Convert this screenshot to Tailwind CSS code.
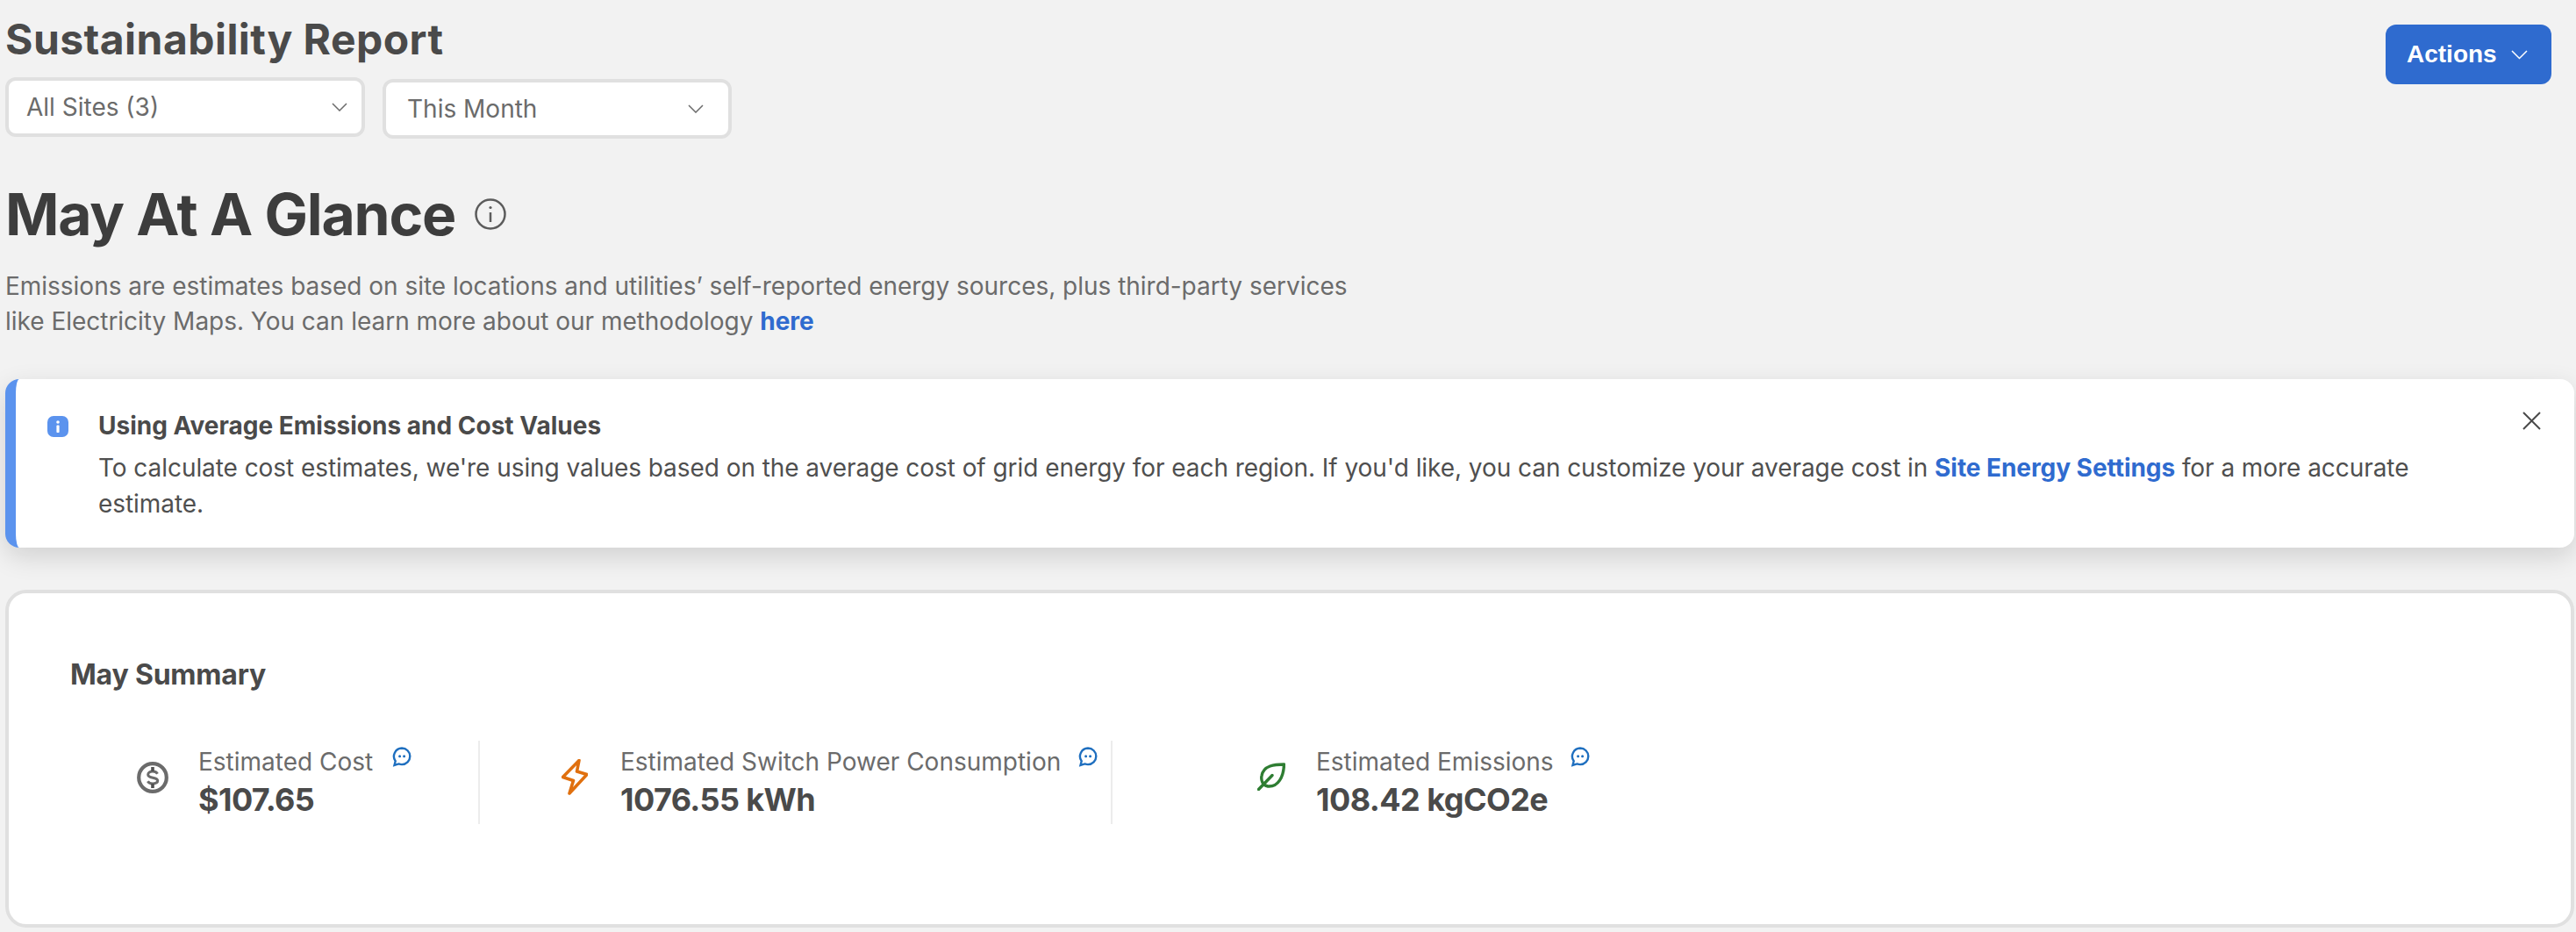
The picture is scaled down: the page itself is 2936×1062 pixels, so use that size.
<!DOCTYPE html>
<html lang="en">
<head>
  <meta charset="UTF-8">
  <title>Sustainability Report</title>
  <script src="https://cdn.jsdelivr.net/npm/@tailwindcss/browser@4"></script>
</head>
<body class="bg-[#f2f2f2] font-['Inter',sans-serif] h-[1062px] overflow-hidden pl-[6px] pr-[2px]">
  <!-- header -->
  <div class="flex justify-between items-start">
    <div>
      <h1 class="pt-[17px] h-[73px] text-[48px] leading-[56px] font-bold text-[#4a4a4a] tracking-[0.45px]">Sustainability Report</h1>
      <div class="flex items-start gap-[20px] mt-[15px]">
        <div class="w-[410px] h-[68px] bg-white border-[4px] border-[#e0e0e0] rounded-[12px] flex items-center justify-between pl-[20px] pr-[16px] text-[28px] text-[#6b6b6b]">
          <span>All Sites (3)</span>
          <svg class="w-[18px] h-[10px]" viewBox="0 0 18 10" fill="none" stroke="#6b6b6b" stroke-width="1.5"><path d="M1 1l8 8 8-8"/></svg>
        </div>
        <div class="w-[398px] h-[68px] mt-[2px] bg-white border-[4px] border-[#e0e0e0] rounded-[12px] flex items-center justify-between pl-[24px] pr-[28px] text-[28px] text-[#6b6b6b]">
          <span>This Month</span>
          <svg class="w-[18px] h-[10px]" viewBox="0 0 18 10" fill="none" stroke="#6b6b6b" stroke-width="1.5"><path d="M1 1l8 8 8-8"/></svg>
        </div>
      </div>
    </div>
    <button class="mt-[28px] mr-[26px] w-[189px] h-[68px] bg-[#2f6bcf] rounded-[12px] flex items-center gap-[16px] pl-[24px] text-white text-[28px] font-bold font-['Liberation_Sans',sans-serif]">
      <span>Actions</span>
      <svg class="w-[19px] h-[11px]" viewBox="0 0 19 11" fill="none" stroke="#fff" stroke-width="1.5"><path d="M1 1l8.500 8.500L18 1"/></svg>
    </button>
  </div>

  <!-- glance -->
  <div class="flex items-center gap-[22px] mt-[50px] h-[72px]">
    <h2 class="text-[66px] leading-[72px] font-bold text-[#3d3d3d] tracking-[-1.2px]">May At A Glance</h2>
    <svg class="w-[36px] h-[36px]" viewBox="0 0 36 36" fill="none" stroke="#5c5c5c" stroke-width="2.500"><circle cx="18" cy="18" r="16.500"/><path d="M18 16v11"/><circle cx="18" cy="10.500" r="1.600" fill="#5c5c5c" stroke="none"/></svg>
  </div>
  <p class="mt-[26px] w-[1560px] text-[28px] leading-[40px] tracking-[-0.02px] text-[#6b6b6b]">Emissions are estimates based on site locations and utilities’ self-reported energy sources, plus third-party services<br>like Electricity Maps. You can learn more about our methodology <a class="font-bold text-[#2f6bcf]">here</a></p>

  <!-- banner -->
  <div class="mt-[46px] h-[192px] bg-white rounded-[16px] border-l-[12px] border-[#5b93ee] shadow-[0_10px_30px_rgba(0,0,0,0.14)] flex pl-[36px] pr-[38px]">
    <svg class="w-[24px] h-[24px] mt-[42px] shrink-0" viewBox="0 0 24 24"><rect width="24" height="24" rx="7" fill="#5b93ee"/><circle cx="12" cy="7" r="1.800" fill="#fff"/><rect x="10.400" y="10.500" width="3.200" height="8.500" rx="1" fill="#fff"/></svg>
    <div class="ml-[34px] pt-[33px] flex-1">
      <div class="text-[28px] leading-[40px] font-bold text-[#4a4a4a]">Using Average Emissions and Cost Values</div>
      <p class="mt-[8px] text-[28px] leading-[41px] tracking-[-0.06px] text-[#4f4f4f]">To calculate cost estimates, we're using values based on the average cost of grid energy for each region. If you'd like, you can customize your average cost in <a class="font-bold text-[#2f6bcf]">Site Energy Settings</a> for a more accurate estimate.</p>
    </div>
    <svg class="w-[21px] h-[21px] mt-[37px] ml-[60px] shrink-0" viewBox="0 0 21 21" fill="none" stroke="#4a4a4a" stroke-width="2"><path d="M1 1l19 19M20 1L1 20"/></svg>
  </div>

  <!-- summary card -->
  <div class="mt-[48px] h-[385px] bg-white border-[4px] border-[#e0e0e0] rounded-[24px] pl-[70px] pt-[70px]">
    <h3 class="text-[32px] leading-[50px] font-bold text-[#4a4a4a] -mt-[2px] tracking-[-0.2px]">May Summary</h3>
    <div class="flex mt-[50px] h-[95px]">
      <div class="w-[467px] flex border-r-2 border-[#ececec] pl-[76px]">
        <svg class="w-[36px] h-[36px] mt-[24px] shrink-0" viewBox="0 0 36 36" fill="none" stroke="#6b6b6b" stroke-width="4.200"><circle cx="18" cy="18" r="15.800"/><path stroke-width="3" d="M23.500 13.800c-1-1.800-3-2.700-5.500-2.700-3 0-5.300 1.300-5.300 3.600 0 4.900 11 2.100 11 6.900 0 2.200-2.500 3.300-5.700 3.300-2.500 0-4.600-.9-5.600-2.700"/><path stroke="#4f4f4f" stroke-width="3.600" d="M18 6v5M18 25v5"/></svg>
        <div class="ml-[34px] w-[221px]">
          <div class="text-[28px] leading-[40px] text-[#6b6b6b] mt-[4px]">Estimated Cost</div>
          <div class="text-[36px] leading-[46px] font-bold text-[#4a4a4a] tracking-[-0.6px]">$107.65</div>
        </div>
        <svg class="w-[24px] h-[24px] mt-[6px] shrink-0" viewBox="0 0 24 24" fill="none" stroke="#1f6fbf" stroke-width="2.400"><path d="M11 2.500a9.300 9.300 0 0 1 0 18.600c-1.300 0-2.500-.3-3.600-.7l-4.900 1.600 1.200-4.800A9.300 9.300 0 0 1 11 2.500z"/><circle cx="8.600" cy="11.800" r="1.500" fill="#1f6fbf" stroke="none"/><circle cx="13.600" cy="11.800" r="1.500" fill="#1f6fbf" stroke="none"/></svg>
      </div>
      <div class="w-[721px] flex border-r-2 border-[#ececec] pl-[93px]">
        <svg class="w-[30px] h-[41px] mt-[21px] shrink-0" viewBox="0 0 30 41" fill="none" stroke="#e0700f" stroke-width="3.600" stroke-linejoin="round"><path d="M20 1.500L1.500 20.500l12 4L9 39l20-21.500L17.500 14z"/></svg>
        <div class="ml-[37px] w-[522px]">
          <div class="text-[28px] leading-[40px] text-[#6b6b6b] mt-[4px]">Estimated Switch Power Consumption</div>
          <div class="text-[36px] leading-[46px] font-bold text-[#4a4a4a] tracking-[-0.6px]">1076.55 kWh</div>
        </div>
        <svg class="w-[24px] h-[24px] mt-[6px] shrink-0" viewBox="0 0 24 24" fill="none" stroke="#1f6fbf" stroke-width="2.400"><path d="M11 2.500a9.300 9.300 0 0 1 0 18.600c-1.300 0-2.500-.3-3.600-.7l-4.900 1.600 1.200-4.800A9.300 9.300 0 0 1 11 2.500z"/><circle cx="8.600" cy="11.800" r="1.500" fill="#1f6fbf" stroke="none"/><circle cx="13.600" cy="11.800" r="1.500" fill="#1f6fbf" stroke="none"/></svg>
      </div>
      <div class="flex pl-[165px]">
        <svg class="w-[32px] h-[32px] mt-[25px] shrink-0" viewBox="0 0 32 32" fill="none" stroke="#2e7d32" stroke-width="3.400" stroke-linecap="round" stroke-linejoin="round"><path d="M30.500 2C20 2 7 3 5 15c-1 5 1 11 7 12 12 1 18-11 18.500-25zM1.500 30.500L17 14.500"/></svg>
        <div class="ml-[35px] w-[290px]">
          <div class="text-[28px] leading-[40px] text-[#6b6b6b] mt-[4px]">Estimated Emissions</div>
          <div class="text-[36px] leading-[46px] font-bold text-[#4a4a4a] tracking-[-0.55px] whitespace-nowrap">108.42 kgCO2e</div>
        </div>
        <svg class="w-[24px] h-[24px] mt-[6px] shrink-0" viewBox="0 0 24 24" fill="none" stroke="#1f6fbf" stroke-width="2.400"><path d="M11 2.500a9.300 9.300 0 0 1 0 18.600c-1.300 0-2.500-.3-3.600-.7l-4.900 1.600 1.200-4.800A9.300 9.300 0 0 1 11 2.500z"/><circle cx="8.600" cy="11.800" r="1.500" fill="#1f6fbf" stroke="none"/><circle cx="13.600" cy="11.800" r="1.500" fill="#1f6fbf" stroke="none"/></svg>
      </div>
    </div>
  </div>
</body>
</html>
